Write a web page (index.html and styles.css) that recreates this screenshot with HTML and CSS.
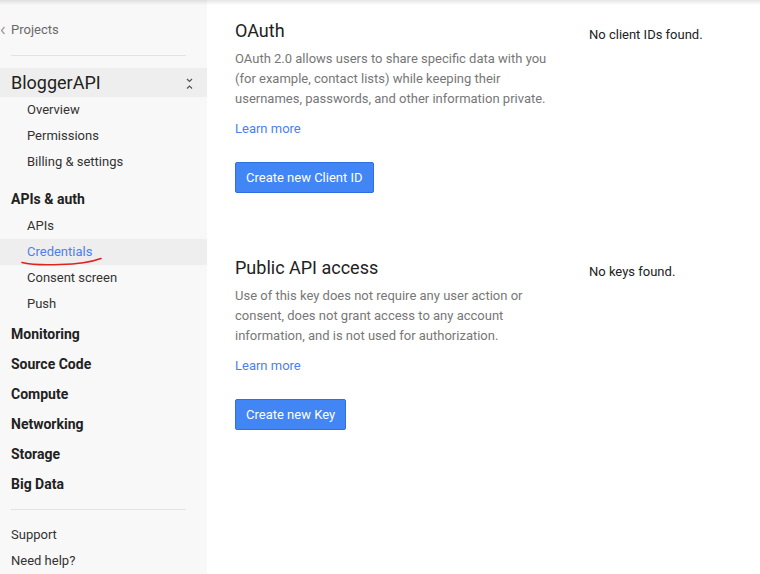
FILE: index.html
```html
<!DOCTYPE html>
<html>
<head>
<meta charset="utf-8">
<link rel="stylesheet" href="styles.css">
</head>
<body>
<div class="topshadow"></div>
<div class="page">
  <nav class="sidebar">
    <div class="back">
      <svg class="back-icon" width="6" height="9" viewBox="0 0 6 9"><path d="M4.5 1 L1.5 4.5 L4.5 8" fill="none" stroke="#9a9a9a" stroke-width="1.2"/></svg>
      <span>Projects</span>
    </div>
    <div class="divider"></div>
    <div class="project">
      <span>BloggerAPI</span>
      <svg class="collapse" width="7" height="12" viewBox="0 0 7 12"><path d="M1 1 L3.5 3.5 L6 1 M1 10.5 L3.5 8 L6 10.5" fill="none" stroke="#555" stroke-width="1.2"/></svg>
    </div>
    <div class="item">Overview</div>
    <div class="item">Permissions</div>
    <div class="item">Billing &amp; settings</div>
    <div class="group">APIs &amp; auth</div>
    <div class="item">APIs</div>
    <div class="item active">Credentials
      <svg class="scribble" width="86" height="12" viewBox="0 0 86 12"><path d="M2 6.5 Q 14 9.5 40 8.5 Q 66 8 81 2.5" fill="none" stroke="#e3211c" stroke-width="1.6" stroke-linecap="round"/></svg>
    </div>
    <div class="item">Consent screen</div>
    <div class="item">Push</div>
    <div class="section first">Monitoring</div>
    <div class="section">Source Code</div>
    <div class="section">Compute</div>
    <div class="section">Networking</div>
    <div class="section">Storage</div>
    <div class="section">Big Data</div>
    <div class="divider bottom"></div>
    <div class="foot">Support</div>
    <div class="foot">Need help?</div>
  </nav>
  <main class="main">
    <section class="block">
      <div class="left">
        <h2 class="title">OAuth</h2>
        <p class="desc">OAuth 2.0 allows users to share specific data with you (for example, contact lists) while keeping their usernames, passwords, and other information private.</p>
        <a class="learn">Learn more</a>
        <button class="btn">Create new Client ID</button>
      </div>
      <div class="right">No client IDs found.</div>
    </section>
    <section class="block second">
      <div class="left">
        <h2 class="title">Public API access</h2>
        <p class="desc">Use of this key does not require any user action or consent, does not grant access to any account information, and is not used for authorization.</p>
        <a class="learn">Learn more</a>
        <button class="btn">Create new Key</button>
      </div>
      <div class="right">No keys found.</div>
    </section>
  </main>
</div>
</body>
</html>
```
FILE: styles.css
```css
* { box-sizing: border-box; }
html, body {
  margin: 0;
  padding: 0;
  height: 100%;
}
body {
  font-family: Roboto, "Liberation Sans", Arial, sans-serif;
  font-size: 13px;
  color: #222;
  background: #fff;
}
.topshadow {
  position: fixed;
  top: 0;
  left: 0;
  right: 0;
  height: 5px;
  background: linear-gradient(to bottom, rgba(0,0,0,0.10), rgba(0,0,0,0));
  pointer-events: none;
  z-index: 5;
}
.page {
  display: flex;
  min-height: 100%;
}
.sidebar {
  width: 207px;
  flex: 0 0 207px;
  background: #f8f8f8;
  padding-top: 20px;
}
.back {
  display: flex;
  align-items: center;
  height: 20px;
  line-height: 20px;
  color: #6a6a6a;
}
.back-icon {
  margin: 0 5px 0 0;
}
.divider {
  height: 1px;
  background: #e3e3e3;
  margin: 15px 21px 0 11px;
}
.project {
  margin-top: 12px;
  height: 29px;
  background: #eeeeee;
  display: flex;
  align-items: center;
  justify-content: space-between;
  padding: 0 14px 0 11px;
  font-size: 18px;
  color: #222;
}
.collapse {
  margin-top: 2px;
}
.item {
  position: relative;
  height: 26px;
  line-height: 26px;
  padding-left: 27px;
  color: #333;
}
.item.active {
  background: #eeeeee;
  color: #4d7ff0;
}
.scribble {
  position: absolute;
  left: 20px;
  top: 17px;
}
.group {
  margin-top: 11px;
  height: 27px;
  line-height: 26px;
  padding-left: 11px;
  font-size: 14px;
  font-weight: 700;
  color: #222;
}
.section {
  height: 30px;
  line-height: 30px;
  padding-left: 11px;
  font-size: 14px;
  font-weight: 700;
  color: #222;
}
.section.first {
  margin-top: 2px;
}
.divider.bottom {
  margin-top: 10px;
}
.foot {
  height: 26px;
  line-height: 26px;
  padding-left: 11px;
  color: #333;
}
.divider.bottom + .foot {
  margin-top: 12px;
}
.main {
  flex: 1;
  padding: 19px 0 0 28px;
}
.block {
  display: flex;
  align-items: flex-start;
  gap: 34px;
}
.block.second {
  margin-top: 63px;
}
.left {
  width: 320px;
  display: flex;
  flex-direction: column;
  align-items: flex-start;
}
.title {
  margin: 0;
  font-size: 18px;
  font-weight: 400;
  line-height: 24px;
  color: #222;
}
.desc {
  margin: 6px 0 0;
  line-height: 20px;
  color: #777;
}
.learn {
  margin-top: 10px;
  line-height: 20px;
  color: #4d7ff0;
  cursor: pointer;
}
.btn {
  margin-top: 23px;
  height: 31px;
  padding: 0 10px;
  font-family: inherit;
  font-size: 13px;
  color: #fff;
  background: #4285f4;
  border: 1px solid #2f6fe0;
  border-radius: 2px;
}
.right {
  padding-top: 6px;
  line-height: 20px;
  color: #222;
}
```
